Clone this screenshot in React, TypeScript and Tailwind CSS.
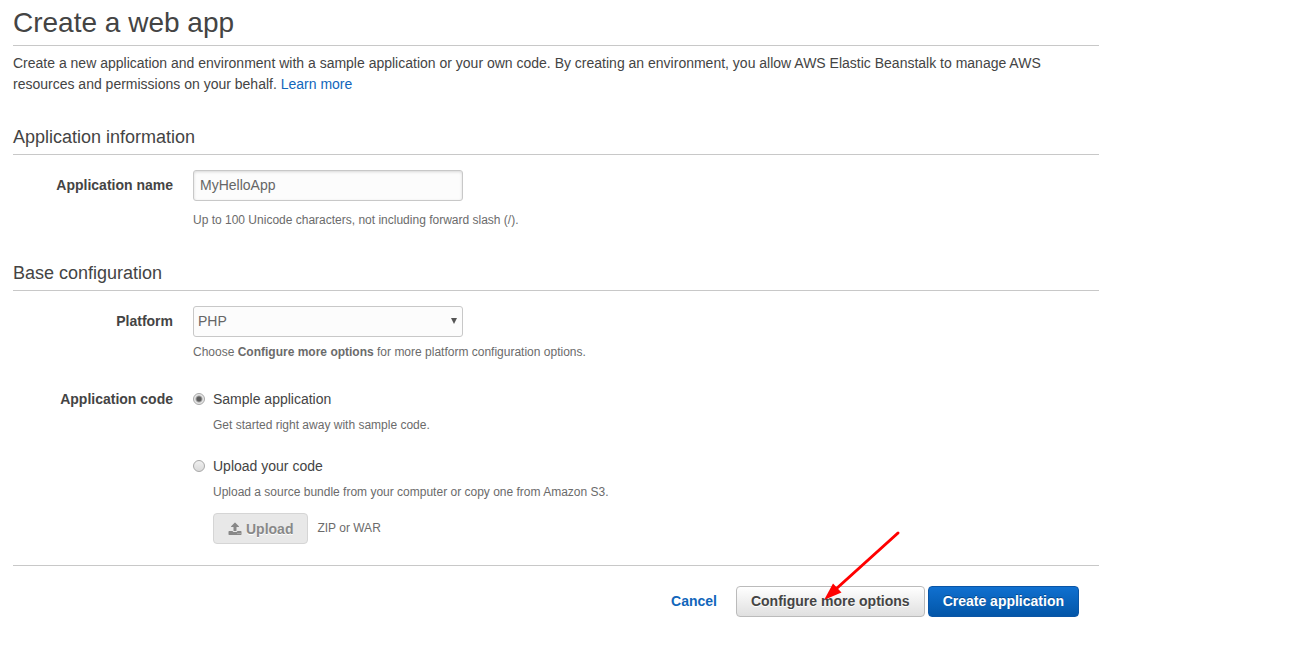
import { useState, type ReactNode } from "react";

function SectionTitle({ children }: { children: ReactNode }) {
  return (
    <h2 className="border-b border-[#c8c8c8] pb-[3px] text-lg leading-[27px] text-[#444]">
      {children}
    </h2>
  );
}

function Hint({ children, id }: { children: ReactNode; id?: string }) {
  return (
    <p id={id} className="text-xs leading-4 text-[#6b6b6b]">
      {children}
    </p>
  );
}

function FieldLabel({ children, htmlFor }: { children: ReactNode; htmlFor: string }) {
  return (
    <label htmlFor={htmlFor} className="w-40 shrink-0 text-right font-bold leading-[31px]">
      {children}
    </label>
  );
}

function UploadIcon() {
  return (
    <svg viewBox="0 0 1792 1792" className="size-[14px] fill-current" aria-hidden="true">
      <path d="M1344 1472q0-26-19-45t-45-19-45 19-19 45 19 45 45 19 45-19 19-45zm256 0q0-26-19-45t-45-19-45 19-19 45 19 45 45 19 45-19 19-45zm128-224v320q0 40-28 68t-68 28h-1472q-40 0-68-28t-28-68v-320q0-40 28-68t68-28h427q21 56 70.5 92t110.5 36h256q61 0 110.5-36t70.5-92h427q40 0 68 28t28 68zm-325-648q-17 40-59 40h-256v448q0 26-19 45t-45 19h-256q-26 0-45-19t-19-45v-448h-256q-42 0-59-40-17-39 14-69l448-448q18-19 45-19t45 19l448 448q31 30 14 69z" />
    </svg>
  );
}

const radioClass =
  "size-3 shrink-0 appearance-none rounded-full border border-[#a8a8a8] bg-linear-to-b from-[#f0f0f0] to-[#dadada] checked:bg-[radial-gradient(circle,#5c5c5c_0,#5c5c5c_2px,#e6e6e6_4px)]";

export default function App() {
  const [source, setSource] = useState("sample");
  const [name, setName] = useState("MyHelloApp");

  return (
    <main className="max-w-[1112px] bg-white px-[13px] pb-8 font-['Liberation_Sans',Arial,sans-serif] text-sm leading-[21px] text-[#444]">
      <h1 className="border-b border-[#c8c8c8] text-[28px] leading-[45px]">Create a web app</h1>
      <p className="mt-[7px]">
        Create a new application and environment with a sample application or your own code. By
        creating an environment, you allow AWS Elastic Beanstalk to manage AWS resources and
        permissions on your behalf.{" "}
        <a href="#learn" className="text-[#1166bb]">
          Learn more
        </a>
      </p>

      <form onSubmit={(e) => e.preventDefault()}>
        <section className="mt-[29px]">
          <SectionTitle>Application information</SectionTitle>
          <div className="mt-[15px] flex gap-5">
            <FieldLabel htmlFor="app-name">Application name</FieldLabel>
            <div className="flex flex-col gap-[11px]">
              <input
                id="app-name"
                type="text"
                value={name}
                onChange={(e) => setName(e.target.value)}
                aria-describedby="name-hint"
                className="h-[31px] w-[270px] rounded-[3px] border border-[#c8c8c8] bg-[#fcfcfc] px-1.5 pb-[2px] text-sm text-[#666] shadow-[inset_0_1px_3px_rgba(0,0,0,0.15)]"
              />
              <Hint id="name-hint">Up to 100 Unicode characters, not including forward slash (/).</Hint>
            </div>
          </div>
        </section>

        <section className="mt-8">
          <SectionTitle>Base configuration</SectionTitle>
          <div className="mt-[15px] flex gap-5">
            <FieldLabel htmlFor="platform">Platform</FieldLabel>
            <div className="flex flex-col gap-[7px]">
              <div className="relative w-[270px]">
                <select
                  id="platform"
                  defaultValue="PHP"
                  className="block h-[31px] w-full appearance-none rounded-[3px] border border-[#c8c8c8] bg-[#fcfcfc] px-1 pb-[2px] text-sm text-[#666]"
                >
                  <option>PHP</option>
                </select>
                <svg
                  viewBox="0 0 6 6"
                  className="pointer-events-none absolute top-3 right-[6px] size-[6px] fill-[#555]"
                  aria-hidden="true"
                >
                  <path d="M0 0h6L3 6z" />
                </svg>
              </div>
              <Hint>
                Choose <b>Configure more options</b> for more platform configuration options.
              </Hint>
            </div>
          </div>

          <div
            role="radiogroup"
            aria-labelledby="code-label"
            className="mt-[29px] flex gap-5 leading-5"
          >
            <span id="code-label" className="w-40 shrink-0 text-right font-bold">
              Application code
            </span>
            <div>
              <label className="flex items-center gap-2">
                <input
                  type="radio"
                  name="source"
                  checked={source === "sample"}
                  onChange={() => setSource("sample")}
                  className={radioClass}
                />
                Sample application
              </label>
              <div className="mt-2 pl-5">
                <Hint>Get started right away with sample code.</Hint>
              </div>
              <label className="mt-[23px] flex items-center gap-2">
                <input
                  type="radio"
                  name="source"
                  checked={source === "upload"}
                  onChange={() => setSource("upload")}
                  className={radioClass}
                />
                Upload your code
              </label>
              <div className="mt-2 pl-5">
                <Hint>Upload a source bundle from your computer or copy one from Amazon S3.</Hint>
                <div className="mt-[13px] flex gap-[9px]">
                  <button
                    type="button"
                    disabled={source !== "upload"}
                    className="flex h-[31px] items-center gap-1 rounded-[4px] border border-[#d5d5d5] bg-[#e8e8e8] px-[14px] font-bold text-[#888] text-shadow-[0_1px_0_#fff]"
                  >
                    <UploadIcon />
                    Upload
                  </button>
                  <div className="pt-[7px]">
                    <Hint>ZIP or WAR</Hint>
                  </div>
                </div>
              </div>
            </div>
          </div>
        </section>

        <footer className="mt-[21px] flex items-center justify-end gap-[3px] border-t border-[#c8c8c8] pt-5 pr-5">
          <a href="#cancel" className="mr-4 font-bold text-[#1166bb]">
            Cancel
          </a>
          <div className="relative">
            <button
              type="button"
              className="block h-[31px] rounded-[4px] border border-[#bbb] bg-linear-to-b from-white to-[#e0e0e0] px-[14px] font-bold text-[#444] text-shadow-[0_1px_0_#fff]"
            >
              Configure more options
            </button>
            <svg
              viewBox="0 0 80 72"
              className="pointer-events-none absolute right-[20px] bottom-[15px] h-[72px] w-[80px]"
              aria-hidden="true"
            >
              <path d="M73 3 11 59" stroke="#f00" strokeWidth="3" strokeLinecap="round" />
              <path d="M-1 70 8 53.500 16.500 62.500z" fill="#f00" />
            </svg>
          </div>
          <button
            type="submit"
            className="h-[31px] rounded-[4px] border border-[#0a55a5] bg-linear-to-b from-[#1070d0] to-[#0356a8] px-[14px] font-bold text-white text-shadow-[0_-1px_0_rgba(0,0,0,0.3)]"
          >
            Create application
          </button>
        </footer>
      </form>
    </main>
  );
}
